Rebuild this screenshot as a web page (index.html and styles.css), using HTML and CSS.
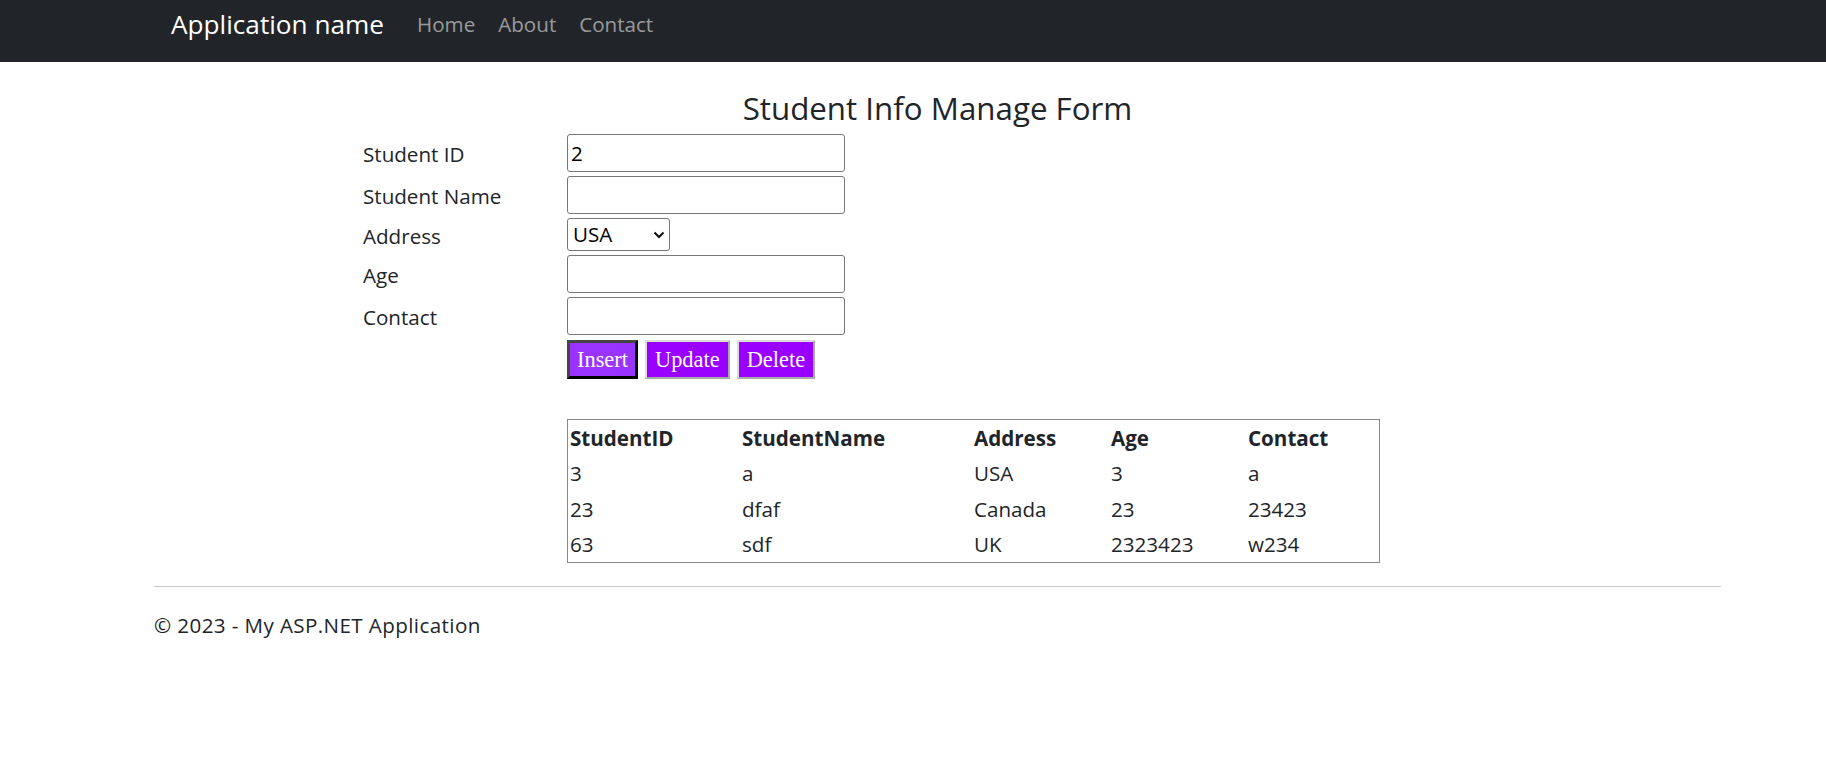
FILE: index.html
```html
<!DOCTYPE html>
<html lang="en">
<head>
<meta charset="utf-8">
<title>Student Info Manage Form</title>
<link rel="stylesheet" href="styles.css">
</head>
<body>
<nav class="navbar">
  <div class="nav-inner">
    <a class="brand" href="#">Application name</a>
    <ul class="nav-links">
      <li><a href="#">Home</a></li>
      <li><a href="#">About</a></li>
      <li><a href="#">Contact</a></li>
    </ul>
  </div>
</nav>
<main class="container">
  <h4 class="title">Student Info Manage Form</h4>
  <form class="form-grid">
    <label class="lbl">Student ID</label>
    <input class="txt" type="text" value="2">
    <label class="lbl">Student Name</label>
    <input class="txt" type="text">
    <label class="lbl">Address</label>
    <div class="select-wrap">
      <select class="sel"><option>USA</option><option>Canada</option><option>UK</option></select>
      <svg class="chev" width="12" height="8" viewBox="0 0 12 8"><path d="M1.5 1.5 L6 6 L10.5 1.5" fill="none" stroke="#111" stroke-width="2"/></svg>
    </div>
    <label class="lbl">Age</label>
    <input class="txt" type="text">
    <label class="lbl">Contact</label>
    <input class="txt" type="text">
    <span class="empty"></span>
    <div class="buttons">
      <button type="button" class="btn btn-active">Insert</button>
      <button type="button" class="btn">Update</button>
      <button type="button" class="btn">Delete</button>
    </div>
  </form>
  <table class="grid">
    <thead>
      <tr><th>StudentID</th><th>StudentName</th><th>Address</th><th>Age</th><th>Contact</th></tr>
    </thead>
    <tbody>
      <tr><td>3</td><td>a</td><td>USA</td><td>3</td><td>a</td></tr>
      <tr><td>23</td><td>dfaf</td><td>Canada</td><td>23</td><td>23423</td></tr>
      <tr><td>63</td><td>sdf</td><td>UK</td><td>2323423</td><td>w234</td></tr>
    </tbody>
  </table>
  <hr class="sep">
  <footer class="footer">
    <p>&copy; 2023 - My ASP.NET Application</p>
  </footer>
</main>
</body>
</html>
```
FILE: styles.css
```css
html, body {
  margin: 0;
  padding: 0;
  background: #fff;
}
body {
  font-family: "Open Sans", "Noto Sans", sans-serif;
  font-size: 20.6px;
  line-height: 1.5;
  color: #212529;
}

/* navbar */
.navbar {
  background: #212529;
  height: 62px;
}
.nav-inner {
  margin-left: 171px;
  display: flex;
  align-items: flex-start;
}
.brand {
  color: #fff;
  text-decoration: none;
  font-size: 26.2px;
  line-height: 1.5;
  padding-top: 5px;
  margin-right: 33px;
}
.nav-links {
  list-style: none;
  margin: 0;
  padding: 9px 0 0 0;
  display: flex;
  gap: 23px;
}
.nav-links a {
  color: rgba(255, 255, 255, 0.55);
  text-decoration: none;
  line-height: 1.5;
}

/* content */
.container {
  width: 1567px;
  margin-left: 154px;
}
.title {
  margin: 28px 0 6px;
  font-size: 31.3px;
  font-weight: 400;
  line-height: 1.2;
  text-align: center;
}

.form-grid {
  margin: 0 0 0 209px;
  display: grid;
  grid-template-columns: 204px 278px;
  row-gap: 4px;
  align-items: center;
}
.lbl {
  padding-top: 3px;
  line-height: 1.5;
}
.txt {
  box-sizing: border-box;
  width: 278px;
  height: 38px;
  margin: 0;
  border: 1px solid #767676;
  border-radius: 3px;
  padding: 0 3px;
  font-family: "Open Sans", "Noto Sans", sans-serif;
  font-size: 20.6px;
  color: #000;
  background: #fff;
}
.select-wrap {
  position: relative;
  width: 103px;
  height: 33px;
}
.sel {
  -webkit-appearance: none;
  appearance: none;
  box-sizing: border-box;
  width: 103px;
  height: 33px;
  margin: 0;
  border: 1px solid #767676;
  border-radius: 3px;
  padding: 0 0 0 5px;
  background: #fff;
  font-family: "Open Sans", "Noto Sans", sans-serif;
  font-size: 20.6px;
  color: #000;
}
.chev {
  position: absolute;
  right: 5px;
  top: 13px;
  pointer-events: none;
}
.buttons {
  grid-column: 2;
  display: flex;
  gap: 7px;
  padding-top: 1px;
}
.btn {
  margin: 0;
  height: 39px;
  padding: 0 8px;
  font-family: "Liberation Serif", "Times New Roman", serif;
  font-size: 22.4px;
  color: #fff;
  background: #9900ff;
  border: 2px solid;
  border-color: #dcdcdc #a9a9a9 #a9a9a9 #dcdcdc;
  border-radius: 0;
}
.btn-active {
  background: #9a33ff;
  border: 3px solid;
  border-color: #454545 #000 #000 #454545;
  padding: 0 7px;
}

/* grid table */
.grid {
  margin: 40px 0 0 413px;
  width: 813px;
  border-collapse: collapse;
  border: 1px solid #888;
  table-layout: fixed;
}
.grid th, .grid td {
  padding: 0 2px;
  height: 35.5px;
  line-height: 35px;
  text-align: left;
  white-space: nowrap;
}
.grid th {
  font-weight: 700;
}
.grid th:nth-child(1) { width: 168px; }
.grid th:nth-child(2) { width: 228px; }
.grid th:nth-child(3) { width: 133px; }
.grid th:nth-child(4) { width: 133px; }
.grid th:nth-child(5) { width: 129px; }

.sep {
  margin: 23px 0 0;
  border: 0;
  border-top: 1px solid #c8c9ca;
  height: 0;
}
.footer p {
  margin: 23px 0 0;
  line-height: 1.5;
  letter-spacing: 0.4px;
}
```
